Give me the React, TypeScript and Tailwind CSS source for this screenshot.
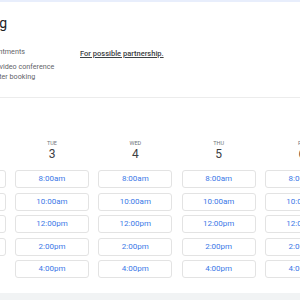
import React from 'react';

const days = [
  { label: 'MON', num: 2, slots: ['8:00am', '10:00am', '12:00pm', '2:00pm'] },
  { label: 'TUE', num: 3, slots: ['8:00am', '10:00am', '12:00pm', '2:00pm', '4:00pm'] },
  { label: 'WED', num: 4, slots: ['8:00am', '10:00am', '12:00pm', '2:00pm', '4:00pm'] },
  { label: 'THU', num: 5, slots: ['8:00am', '10:00am', '12:00pm', '2:00pm', '4:00pm'] },
  { label: 'FRI', num: 6, slots: ['8:00am', '10:00am', '12:00pm', '2:00pm', '4:00pm'] },
];

function ClockIcon() {
  return (
    <svg viewBox="0 0 24 24" className="w-[11px] h-[11px] shrink-0" fill="none" stroke="#5f6368" strokeWidth="2">
      <circle cx="12" cy="12" r="9" />
      <path d="M12 7v5l3 2" />
    </svg>
  );
}

function VideoIcon() {
  return (
    <svg viewBox="0 0 24 24" className="w-[11px] h-[11px] shrink-0" fill="#5f6368">
      <path d="M3 6h12v12H3z M15 10l6-4v12l-6-4z" />
    </svg>
  );
}

export default function App() {
  return (
    <div className="w-[300px] h-[300px] overflow-hidden bg-white flex flex-col font-['Roboto','Liberation_Sans',sans-serif]">
      <div className="h-[2px] shrink-0 bg-[#e8eefc]" />

      {/* header */}
      <div className="h-[96px] shrink-0 border-b border-[#ececec] flex -ml-[120px]">
        <div className="w-[200px] shrink-0 pt-[12px] pl-[30px]">
          <h1 className="text-[14px] leading-[18px] text-[#202124] whitespace-nowrap">Book a meeting</h1>
          <div className="mt-[15px] text-[7.2px] leading-[10px] text-[#5f6368]">
            <div className="flex gap-[36px] whitespace-nowrap">
              <ClockIcon />
              <span>30 min appointments</span>
            </div>
            <div className="mt-[4px] flex gap-[36px]">
              <VideoIcon />
              <span className="w-[104px]">Google Meet video conference info added after booking</span>
            </div>
          </div>
        </div>
        <div className="pt-[47px] text-[7.5px] leading-[10px]">
          <a className="block font-medium text-[#3c4043] underline whitespace-nowrap">
            For possible partnership.
          </a>
        </div>
      </div>

      {/* calendar */}
      <div className="h-[195px] shrink-0 pt-[41px] -ml-[68.33px] flex gap-x-[9.33px]">
        {days.map((d) => (
          <div key={d.label} className="w-[74px] shrink-0 flex flex-col items-center">
            <div className="text-[5.5px] leading-[8px] text-[#70757a]">{d.label}</div>
            <div className="text-[12px] leading-[16px] text-[#3c4043] -mt-[1px]">{d.num}</div>
            <div className="mt-[8px] w-full flex flex-col gap-[4.5px]">
              {d.slots.map((s) => (
                <div
                  key={s}
                  className="h-[18px] w-full rounded-[3px] border border-[#e3e3e3] flex items-center justify-center text-[8px] text-[#3b78e7]"
                >
                  {s}
                </div>
              ))}
            </div>
          </div>
        ))}
      </div>

      <div className="flex-1 bg-[#f1f3f4]" />
    </div>
  );
}
